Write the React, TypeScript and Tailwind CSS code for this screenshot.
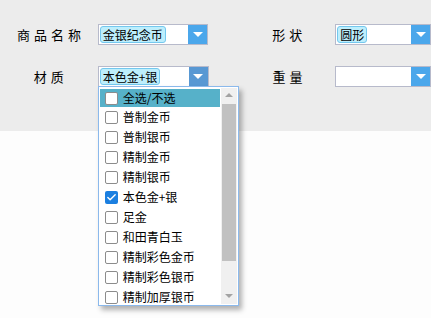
import { Check } from "lucide-react"

const items = [
  { name: "普制金币", on: false },
  { name: "普制银币", on: false },
  { name: "精制金币", on: false },
  { name: "精制银币", on: false },
  { name: "本色金+银", on: true },
  { name: "足金", on: false },
  { name: "和田青白玉", on: false },
  { name: "精制彩色金币", on: false },
  { name: "精制彩色银币", on: false },
  { name: "精制加厚银币", on: false },
]

const font = { fontFamily: '"Noto Sans CJK SC", "Noto Sans", sans-serif' }

function Tag({ text }: { text: string }) {
  return (
    <span className="ml-px flex h-[17px] items-center rounded-[3px] border border-[#74c8ee] bg-[#bdeefc] px-[2px] text-[12px] leading-none text-black">
      {text}
    </span>
  )
}

function Select({ tag, width, open }: { tag?: string; width: string; open?: boolean }) {
  return (
    <div className={`${width} flex h-[21px] items-center border border-[#b7bacb] bg-white`}>
      <div className="flex h-full flex-1 items-center overflow-hidden">{tag && <Tag text={tag} />}</div>
      <div className={`flex h-full w-[19px] items-center justify-center ${open ? "bg-[#5898d3]" : "bg-[#4ba7eb]"}`}>
        <span className="h-0 w-0 border-x-[5px] border-t-[5px] border-x-transparent border-t-white" />
      </div>
    </div>
  )
}

function Box({ on }: { on?: boolean }) {
  return on ? (
    <span className="flex h-[13px] w-[13px] items-center justify-center rounded-[2px] bg-[#1b7fe0]">
      <Check size={11} strokeWidth={3} className="text-white" />
    </span>
  ) : (
    <span className="h-[13px] w-[13px] rounded-[2px] border border-[#8c8c8c] bg-white" />
  )
}

export default function App() {
  return (
    <main className="relative h-[318px] w-[431px] overflow-hidden bg-[#fdfdfd] text-black" style={font}>
      <section className="flex h-[131px] flex-col gap-[21px] bg-[#ececec] pt-[24px]">
        <div className="flex items-center">
          <label className="w-[98px] pl-[4px] text-center text-[13px] tracking-[4px]">商品名称</label>
          <Select tag="金银纪念币" width="w-[111px]" />
          <label className="ml-[31px] w-[96px] pl-[4px] text-center text-[13px] tracking-[4px]">形状</label>
          <Select tag="圆形" width="w-[96px]" />
        </div>
        <div className="flex items-center">
          <label className="w-[98px] pl-[4px] text-center text-[13px] tracking-[4px]">材质</label>
          <div className="relative">
            <Select tag="本色金+银" width="w-[111px]" open />
            <div className="absolute left-0 top-[20px] z-10 flex h-[220px] w-[141px] border border-[#8bb9ec] bg-white p-[1px] shadow-[3px_4px_5px_rgba(0,0,0,0.3)]">
              <ul className="flex-1 overflow-hidden pr-[1px] pt-[1px]">
                <li className="flex h-[18px] items-center gap-[5px] bg-[#56b1c9] pl-[5px] text-[12px]">
                  <Box />
                  全选/不选
                </li>
                {items.map((it) => (
                  <li key={it.name} className="flex h-[20px] items-center gap-[5px] pl-[5px] text-[12px]">
                    <Box on={it.on} />
                    {it.name}
                  </li>
                ))}
              </ul>
              <div className="flex w-[16px] flex-col items-center bg-[#f0f0f0]">
                <span className="mt-[5px] h-0 w-0 border-x-[4px] border-b-[4px] border-x-transparent border-b-[#a3a3a3]" />
                <span className="mt-[7px] h-[157px] w-[14px] bg-[#c1c1c1]" />
                <span className="mt-auto mb-[6px] h-0 w-0 border-x-[4px] border-t-[4px] border-x-transparent border-t-[#a3a3a3]" />
              </div>
            </div>
          </div>
          <label className="ml-[31px] w-[96px] pl-[4px] text-center text-[13px] tracking-[4px]">重量</label>
          <Select width="w-[96px]" />
        </div>
      </section>
    </main>
  )
}
